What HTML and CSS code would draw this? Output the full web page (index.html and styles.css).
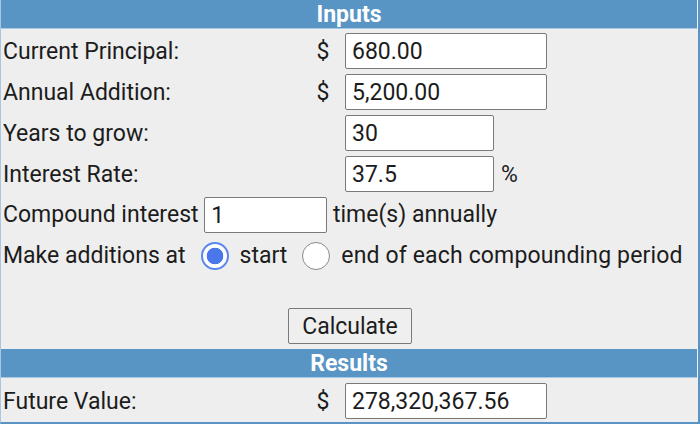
FILE: index.html
```html
<!DOCTYPE html>
<html>
<head>
<meta charset="utf-8">
<link rel="stylesheet" href="styles.css">
</head>
<body>
<div class="calc">
  <div class="head">Inputs</div>
  <div class="inputs">
    <div class="row">
      <span class="label">Current Principal:</span>
      <span class="cur">$</span>
      <span class="field"><input class="box wide" type="text" value="680.00"></span>
    </div>
    <div class="row">
      <span class="label">Annual Addition:</span>
      <span class="cur">$</span>
      <span class="field"><input class="box wide" type="text" value="5,200.00"></span>
    </div>
    <div class="row">
      <span class="label">Years to grow:</span>
      <span class="cur"></span>
      <span class="field"><input class="box mid" type="text" value="30"></span>
    </div>
    <div class="row">
      <span class="label">Interest Rate:</span>
      <span class="cur"></span>
      <span class="field"><input class="box mid" type="text" value="37.5"><span class="pct">%</span></span>
    </div>
    <div class="line">Compound interest <input class="box small" type="text" value="1"> time(s) annually</div>
    <div class="line">Make additions at<input class="radio" type="radio" name="when" checked><span>start</span><input class="radio" type="radio" name="when"><span class="long">end of each compounding period</span></div>
    <div class="actions"><button class="btn" type="button">Calculate</button></div>
  </div>
  <div class="head">Results</div>
  <div class="results">
    <div class="row">
      <span class="label">Future Value:</span>
      <span class="cur">$</span>
      <span class="field"><input class="box wide" type="text" value="278,320,367.56"></span>
    </div>
  </div>
</div>
</body>
</html>
```

FILE: styles.css
```css
html, body {
  margin: 0;
  padding: 0;
  background: #ffffff;
}

body {
  font-family: Roboto, "Liberation Sans", sans-serif;
  font-size: 23px;
  color: #1c1c1c;
}

.calc {
  width: 700px;
  box-sizing: border-box;
  background: #eeeeee;
  border-left: 1px solid #aac7e2;
  border-right: 2px solid #5a94c4;
  border-bottom: 2px solid #5a94c4;
}

.head {
  height: 28px;
  line-height: 29px;
  background: #5895c5;
  color: #ffffff;
  font-weight: bold;
  text-align: center;
  border-bottom: 1px solid #a9c8e4;
  margin-right: 1px;
}

.inputs {
  padding-top: 4px;
  display: flex;
  flex-direction: column;
  gap: 5px;
}

.results {
  padding: 5px 0 3px;
}

.row {
  display: grid;
  grid-template-columns: 304px 36px 1fr;
  align-items: center;
  height: 36px;
}

.label {
  padding-left: 2px;
}

.cur {
  text-align: center;
}

.field {
  display: flex;
  align-items: center;
  padding-left: 4px;
}

.box {
  font-family: Roboto, "Liberation Sans", sans-serif;
  font-size: 23px;
  color: #1c1c1c;
  height: 36px;
  box-sizing: border-box;
  border: 1px solid #7a7a7a;
  border-radius: 2px;
  background: #ffffff;
  padding: 0 6px;
  margin: 0;
  outline: none;
}

.wide { width: 202px; }
.mid { width: 149px; }
.small { width: 123px; vertical-align: middle; }

.pct {
  margin-left: 7px;
}

.line {
  height: 36px;
  line-height: 36px;
  padding-left: 2px;
  display: flex;
  align-items: center;
  white-space: pre;
}

.long {
  letter-spacing: 0.15px;
}

.radio {
  appearance: none;
  -webkit-appearance: none;
  width: 28px;
  height: 28px;
  margin: 0 11px 0 15px;
  border: 1.5px solid #8a8a8a;
  border-radius: 50%;
  background: #ffffff;
  box-sizing: border-box;
  flex: none;
}

.radio:checked {
  border: 2px solid #5a87ee;
  background: radial-gradient(circle, #4a78ea 0 8px, #ffffff 8.6px);
}

.radio + span + .radio {
  margin-left: 15px;
}

.actions {
  display: flex;
  justify-content: center;
  padding-top: 29px;
  padding-bottom: 5px;
}

.btn {
  font-family: Roboto, "Liberation Sans", sans-serif;
  font-size: 23px;
  color: #1c1c1c;
  width: 124px;
  height: 36px;
  border: 1px solid #7a7a7a;
  border-radius: 2px;
  background: #efefef;
  padding: 0;
  margin-left: 1px;
}
```
